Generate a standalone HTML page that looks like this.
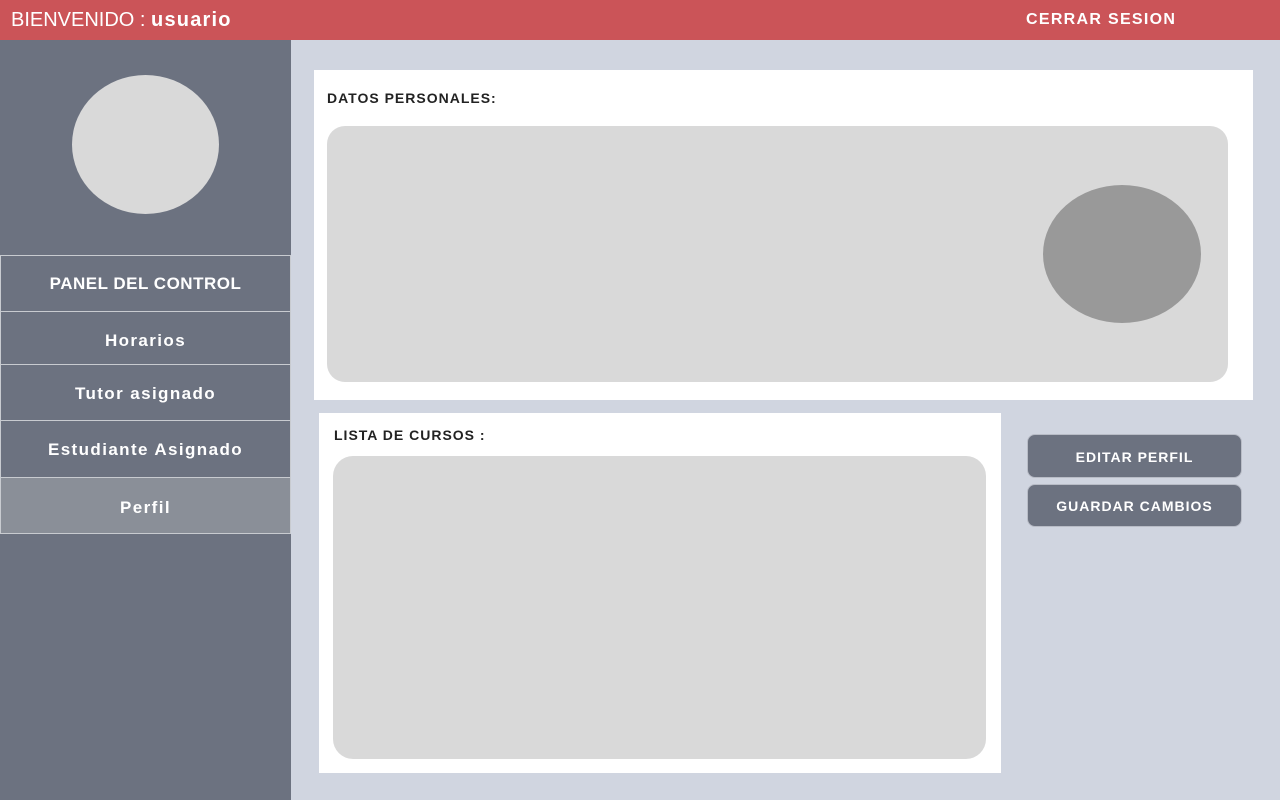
<!DOCTYPE html>
<html><head><style>
*{margin:0;padding:0;box-sizing:border-box}
body{width:1280px;height:800px;background:#d0d5e0;font-family:"Liberation Sans",Arial,sans-serif;position:relative;overflow:hidden}
.hdr{position:absolute;left:0;top:0;width:1280px;height:40px;background:#cb5458;color:#fff}
.hdr .t{position:absolute;left:11px;top:9px;font-size:20px}
.hdr .t b{letter-spacing:1.2px}
.hdr .c{position:absolute;left:1026px;top:11px;font-size:16px;font-weight:bold;letter-spacing:1.3px}
.side{position:absolute;left:0;top:40px;width:291px;height:760px;background:#6c7280}
.av{position:absolute;left:72px;top:75px;width:147px;height:139px;border-radius:50%;background:#d9d9d9}
.m{position:absolute;left:0;width:291px;border:1px solid #c8cbd0;color:#fff;font-weight:bold;font-size:17px;text-align:center;background:#6c7280;letter-spacing:1.4px}
.box{position:absolute;background:#fff}
.g{position:absolute;background:#d9d9d9}
.lbl{position:absolute;font-weight:bold;font-size:14px;color:#222;letter-spacing:1px}
.btn{position:absolute;left:1027px;width:215px;border:1px solid #b8bcc6;border-radius:8px;background:#6c7280;color:#fff;font-weight:bold;font-size:14px;text-align:center;letter-spacing:1px}
</style></head><body>
<div class="hdr"><div class="t">BIENVENIDO : <b>usuario</b></div><div class="c">CERRAR SESION</div></div>
<div class="side"></div>
<div class="av"></div>
<div class="m" style="top:255px;height:57px;line-height:56px;letter-spacing:0.5px">PANEL DEL CONTROL</div>
<div class="m" style="top:311px;height:54px;line-height:58px">Horarios</div>
<div class="m" style="top:364px;height:57px;line-height:57px">Tutor asignado</div>
<div class="m" style="top:420px;height:58px;line-height:58px">Estudiante Asignado</div>
<div class="m" style="top:477px;height:57px;line-height:59px;background:#8a8f98">Perfil</div>
<div class="box" style="left:314px;top:70px;width:939px;height:330px"></div>
<div class="lbl" style="left:327px;top:90px">DATOS PERSONALES:</div>
<div class="g" style="left:327px;top:126px;width:901px;height:256px;border-radius:18px"></div>
<div style="position:absolute;left:1043px;top:185px;width:158px;height:138px;border-radius:50%;background:#999"></div>
<div class="box" style="left:319px;top:413px;width:682px;height:360px"></div>
<div class="lbl" style="left:334px;top:427px">LISTA DE CURSOS :</div>
<div class="g" style="left:333px;top:456px;width:653px;height:303px;border-radius:20px"></div>
<div class="btn" style="top:434px;height:44px;line-height:44px">EDITAR PERFIL</div>
<div class="btn" style="top:484px;height:43px;line-height:43px">GUARDAR CAMBIOS</div>
</body></html>
